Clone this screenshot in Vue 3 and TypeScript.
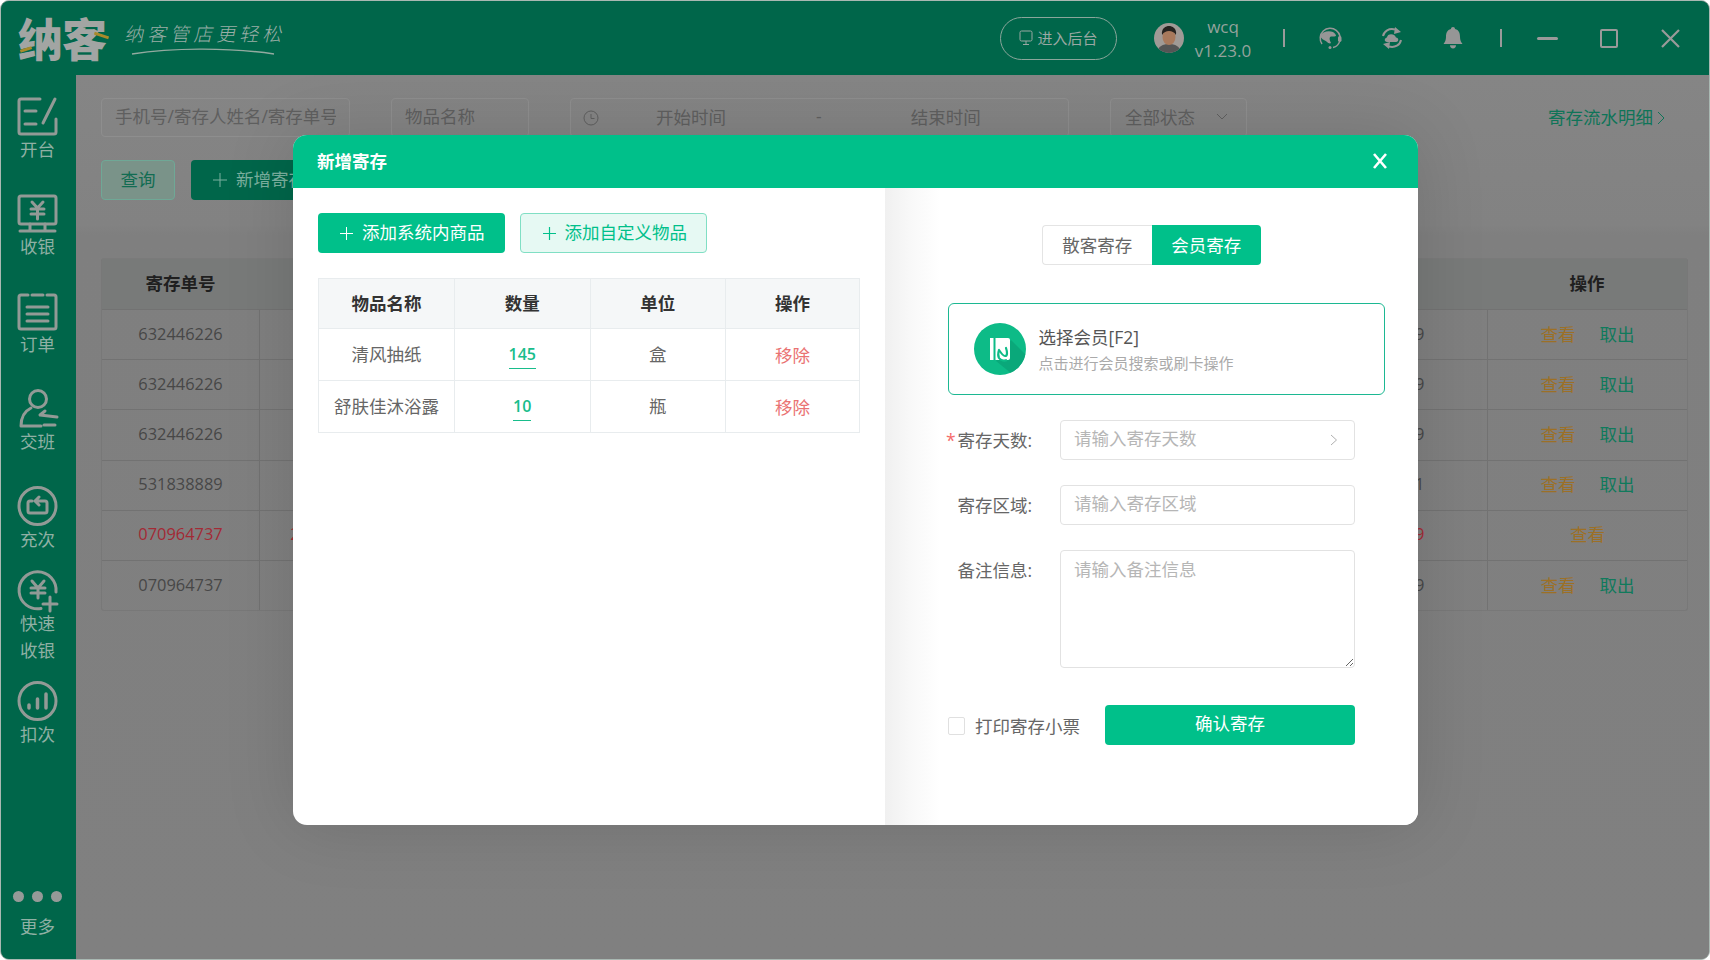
<script setup lang="ts">
interface Row { no: string; name: string; end: string; takeOut: boolean; overdue?: boolean }
const rows: Row[] = [
  { no: '632446226', name: '', end: '2022-04-09', takeOut: true },
  { no: '632446226', name: '', end: '2022-04-09', takeOut: true },
  { no: '632446226', name: '', end: '2022-04-09', takeOut: true },
  { no: '531838889', name: '', end: '2022-04-01', takeOut: true },
  { no: '070964737', name: '2022-03-29 16:40:39', end: '2022-03-29', takeOut: false, overdue: true },
  { no: '070964737', name: '', end: '2022-04-09', takeOut: true },
]
const goods = [
  { name: '清风抽纸', qty: '145', unit: '盒' },
  { name: '舒肤佳沐浴露', qty: '10', unit: '瓶' },
]
</script>

<template>
  <div class="window">
    <header class="topbar">
      <div class="logo">
        <div class="logo-mark">
          <span class="logo-main">纳客</span>
          <i class="accent a1" />
          <i class="accent a2" />
        </div>
        <div class="slogan">
          <span>纳客管店更轻松</span>
          <svg width="144" height="8" viewBox="0 0 144 8"><path d="M1 7C40 1 95 0 143 7" fill="none" stroke="#93aaa0" stroke-width="1.4" /></svg>
        </div>
      </div>
      <div class="top-right">
        <button class="admin-btn">
          <svg width="14" height="16" viewBox="0 0 14 16"><rect x="1" y="1" width="12" height="10" rx="1.5" fill="none" stroke="#9aa8a3" /><path d="M7 11v3M4 14.500h6" stroke="#9aa8a3" /></svg>
          <span>进入后台</span>
        </button>
        <svg class="avatar" width="30" height="30" viewBox="0 0 30 30">
          <defs><clipPath id="av"><circle cx="15" cy="15" r="15" /></clipPath></defs>
          <g clip-path="url(#av)">
            <rect width="30" height="30" fill="#a09a96" />
            <path d="M3 30c1-7 6-9 12-9s11 2 12 9z" fill="#555" />
            <ellipse cx="15" cy="14" rx="6.500" ry="8" fill="#a8795c" />
            <path d="M8 12c-1-7 4-9 7-9s8 2 7 9c-2-3-4-4-7-4s-5 1-7 4z" fill="#26221f" />
          </g>
        </svg>
        <div class="user"><span>wcq</span><span>v1.23.0</span></div>
        <i class="sep" />
        <svg class="ic i-head" width="23" height="22" viewBox="0 0 23 22">
          <path d="M3 17A10 10 0 1 1 20 16c-1 2-3 4-6 4.500" fill="none" stroke="#969696" stroke-width="1.500" />
          <path d="M1 9c2-4 8-6 13-4 2 1 3 3 3 4-2 1-5 0-6 1-1 2 0 4 1 6-1 1-3 0-4-1-2-2-5-2-7-6z" fill="#969696" />
          <rect x="19" y="9" width="3.500" height="6" rx="1.700" fill="#969696" />
          <circle cx="11" cy="20.500" r="1.500" fill="#969696" />
        </svg>
        <svg class="ic i-sync" width="22" height="22" viewBox="0 0 22 22">
          <path d="M2 9C3 4 8 1 14 2.500M20 13c-1 5-6 8-12 6.500" fill="none" stroke="#969696" stroke-width="2" />
          <path d="M14 0l6 5-7 2zM8 22l-6-5 7-2z" fill="#969696" />
          <path d="M6 15c-3 0-3-4 0-4.500C6 6 14 6 15 10.500c3 0 3 4.500 0 4.500z" fill="#969696" />
        </svg>
        <svg class="ic i-bell" width="20" height="22" viewBox="0 0 20 22">
          <path d="M10 0c1.300 0 2 .8 2 2 4 1 5 4 5 8 0 3 1 5 2.500 7H.5C2 15 3 13 3 10c0-4 1-7 5-8 0-1.200.7-2 2-2z" fill="#969696" />
          <path d="M7 18.300h6c0 2-1.200 3.200-3 3.200s-3-1.200-3-3.200z" fill="#969696" />
        </svg>
        <i class="sep sep2" />
        <span class="win-min" />
        <span class="win-max" />
        <svg class="win-close" width="21" height="19" viewBox="0 0 21 19"><path d="M2 1l17 17M19 1L2 18" stroke="#9a9a9a" stroke-width="2.200" /></svg>
      </div>
    </header>

    <div class="main">
      <aside class="sidebar">
        <div class="nav-list">
          <div class="nav-item">
            <svg width="41" height="39" viewBox="0 0 41 39" class="nav-ic"><path d="M23 2H4a2 2 0 0 0-2 2v31a2 2 0 0 0 2 2h33a2 2 0 0 0 2-2V22M8 14h11M8 27h11M38 2L26 26" /></svg>
            <span>开台</span>
          </div>
          <div class="nav-item">
            <svg width="41" height="39" viewBox="0 0 41 39" class="nav-ic"><rect x="2" y="2" width="37" height="28" rx="2" /><path d="M13 30v7M28 30v7M3 37h35M15 8l5.500 6 5.500-6M14 15h13M14 20h13M20.500 14v11" /></svg>
            <span>收银</span>
          </div>
          <div class="nav-item">
            <svg width="41" height="39" viewBox="0 0 41 39" class="nav-ic"><path d="M11 3H4a2 2 0 0 0-2 2v30a2 2 0 0 0 2 2h33a2 2 0 0 0 2-2V5a2 2 0 0 0-2-2h-7M15 3h11M10 15h21M10 22h21M10 29h21" /></svg>
            <span>订单</span>
          </div>
          <div class="nav-item">
            <svg width="41" height="39" viewBox="0 0 41 39" class="nav-ic"><circle cx="21" cy="10" r="8.500" /><path d="M14 19C8 22 4 28 4 37h20M28 22l-5 4 17 2M27 36h11" /></svg>
            <span>交班</span>
          </div>
          <div class="nav-item">
            <svg width="41" height="40" viewBox="0 0 41 40" class="nav-ic"><circle cx="20.500" cy="20" r="18.500" /><path d="M15 15h-2a2 2 0 0 0-2 2v8a2 2 0 0 0 2 2h15a2 2 0 0 0 2-2v-8a2 2 0 0 0-2-2h-7M22 11l-4 4 4 4" /></svg>
            <span>充次</span>
          </div>
          <div class="nav-item">
            <svg width="41" height="39" viewBox="0 0 41 39" class="nav-ic"><path d="M39 21A18.500 18.500 0 1 0 24 37.500M15 10l6 7 6-7M14 17h14M14 22h14M21 17v10M33 26v14M26 33h14" /></svg>
            <span>快速<br />收银</span>
          </div>
          <div class="nav-item">
            <svg width="41" height="40" viewBox="0 0 41 40" class="nav-ic"><circle cx="20.500" cy="20" r="18.500" /><path d="M12 24v3" stroke-width="3.500" /><path d="M20.500 18v9" stroke-width="3.500" /><path d="M29 13v14" stroke-width="3.500" /></svg>
            <span>扣次</span>
          </div>
        </div>
        <div class="more">
          <div class="dots"><i /><i /><i /></div>
          <span>更多</span>
        </div>
      </aside>

      <section class="content">
        <div class="filters">
          <input class="f-input w-phone" placeholder="手机号/寄存人姓名/寄存单号" />
          <input class="f-input w-goods" placeholder="物品名称" />
          <div class="f-date">
            <svg width="16" height="16" viewBox="0 0 16 16"><circle cx="8" cy="8" r="7" fill="none" stroke="#5f5f5f" /><path d="M8 4v4.500h3.500" fill="none" stroke="#5f5f5f" /></svg>
            <span class="d1">开始时间</span><span class="d2">-</span><span class="d3">结束时间</span>
          </div>
          <div class="f-select">
            <span>全部状态</span>
            <svg width="12" height="8" viewBox="0 0 12 8"><path d="M1 1l5 5 5-5" fill="none" stroke="#5f5f5f" /></svg>
          </div>
          <a class="flow-link"><span>寄存流水明细</span><svg width="8" height="14" viewBox="0 0 8 14"><path d="M1 1l6 6-6 6" fill="none" stroke="#0f7458" /></svg></a>
        </div>
        <div class="actions">
          <button class="btn-query">查询</button>
          <button class="btn-new"><svg width="14" height="14" viewBox="0 0 14 14"><path d="M7 0v14M0 7h14" stroke="#7bb09f" /></svg><span>新增寄存</span></button>
        </div>
        <div class="data-table">
          <div class="tr th">
            <div class="cell">寄存单号</div>
            <div class="cell" /><div class="cell" /><div class="cell" /><div class="cell" /><div class="cell" />
            <div class="cell">操作</div>
          </div>
          <div v-for="(r, i) in rows" :key="i" class="tr" :class="{ overdue: r.overdue }">
            <div class="cell">{{ r.no }}</div>
            <div class="cell">{{ r.name }}</div>
            <div class="cell" /><div class="cell" /><div class="cell" />
            <div class="cell">{{ r.end }}</div>
            <div class="cell ops">
              <a class="view">查看</a>
              <a v-if="r.takeOut" class="take">取出</a>
            </div>
          </div>
        </div>
      </section>
    </div>

    <div class="modal">
      <div class="modal-head">
        <span>新增寄存</span>
        <svg width="14" height="16" viewBox="0 0 14 16"><path d="M1 1l12 14M13 1L1 15" stroke="#fff" stroke-width="2.600" /></svg>
      </div>
      <div class="modal-body">
        <div class="m-left">
          <div class="m-btns">
            <button class="add solid"><svg width="13" height="13" viewBox="0 0 13 13"><path d="M6.500 0v13M0 6.500h13" stroke="#fff" /></svg><span>添加系统内商品</span></button>
            <button class="add light"><svg width="13" height="13" viewBox="0 0 13 13"><path d="M6.500 0v13M0 6.500h13" stroke="#00c08a" stroke-width="1.200" /></svg><span>添加自定义物品</span></button>
          </div>
          <div class="goods">
            <div class="g-row g-head"><div>物品名称</div><div>数量</div><div>单位</div><div>操作</div></div>
            <div v-for="g in goods" :key="g.name" class="g-row">
              <div>{{ g.name }}</div>
              <div><span class="qty">{{ g.qty }}</span></div>
              <div>{{ g.unit }}</div>
              <div class="remove">移除</div>
            </div>
          </div>
        </div>
        <div class="m-right">
          <div class="seg">
            <span class="seg-a">散客寄存</span>
            <span class="seg-b">会员寄存</span>
          </div>
          <div class="member">
            <svg width="52" height="52" viewBox="0 0 52 52">
              <defs><clipPath id="mc"><circle cx="26" cy="26" r="26" /></clipPath></defs>
              <circle cx="26" cy="26" r="26" fill="#0dbb87" />
              <path d="M22 38L37 17l20 20-14 18z" fill="#0aa87a" clip-path="url(#mc)" />
              <path d="M16 15h3.500v22H16z" fill="#fff" />
              <path d="M21.500 15H34a2 2 0 0 1 2 2v18a2 2 0 0 1-2 2H21.500z" fill="#fff" />
              <path d="M25 27c2 3 4 6 6 6 3 0 2-5 1-8" fill="none" stroke="#0dbb87" stroke-width="2.200" stroke-linecap="round" />
              <path d="M33 37c-2 1-6 1-8-2-1-2-1-5 0-8" fill="none" stroke="#0dbb87" stroke-width="2.200" />
            </svg>
            <div class="member-text">
              <div class="mt1">选择会员[F2]</div>
              <div class="mt2">点击进行会员搜索或刷卡操作</div>
            </div>
          </div>
          <div class="field">
            <label><i class="star">*</i>寄存天数:</label>
            <div class="input-wrap">
              <input placeholder="请输入寄存天数" />
              <svg width="8" height="12" viewBox="0 0 8 12"><path d="M1 1l5.500 5L1 11" fill="none" stroke="#b0b0b0" /></svg>
            </div>
          </div>
          <div class="field">
            <label><i class="star" />寄存区域:</label>
            <div class="input-wrap"><input placeholder="请输入寄存区域" /></div>
          </div>
          <div class="field">
            <label><i class="star" />备注信息:</label>
            <textarea placeholder="请输入备注信息" />
          </div>
          <div class="foot">
            <span class="check" />
            <span class="check-label">打印寄存小票</span>
            <button class="confirm">确认寄存</button>
          </div>
        </div>
      </div>
    </div>
  </div>
</template>

<style>
html, body { margin: 0; background: #fff; }
</style>

<style scoped>
* { box-sizing: border-box; }
.window {
  position: relative;
  width: 1710px;
  height: 960px;
  border: 1px solid #a9b8b2;
  border-radius: 9px;
  overflow: hidden;
  background: #808080;
  display: flex;
  flex-direction: column;
  font-family: "Open Sans", "Noto Sans CJK SC", sans-serif;
  font-size: 17.5px;
}
button { font-family: inherit; cursor: pointer; }
.topbar {
  height: 74px;
  flex: none;
  background: #00664a;
  display: flex;
  justify-content: space-between;
  align-items: center;
}
.logo { display: flex; align-items: center; margin-left: 17px; }
.logo-mark { position: relative; width: 108px; height: 50px; }
.logo-main {
  font-family: "Noto Sans CJK SC", sans-serif;
  font-weight: 900;
  font-size: 45px;
  line-height: 50px;
  color: #a2a5a3;
  letter-spacing: -1px;
}
.accent { position: absolute; height: 3px; background: #a88a2a; transform: rotate(-18deg); }
.a1 { left: 2px; top: 35px; width: 12px; }
.a2 { left: 76px; top: 21px; width: 15px; transform: rotate(18deg); }
.slogan { display: flex; flex-direction: column; color: #9aaea6; }
.slogan span {
  font-family: "Noto Sans CJK SC", sans-serif;
  font-weight: 300;
  font-size: 19px;
  line-height: 24px;
  letter-spacing: 4px;
  display: block;
  transform: skewX(-12deg);
}
.slogan svg { margin-left: 5px; margin-top: 2px; }
.top-right { display: flex; align-items: center; height: 100%; }
.admin-btn {
  width: 117px;
  height: 43px;
  border: 1px solid #8aa69b;
  border-radius: 22px;
  background: transparent;
  color: #9aa8a3;
  font-size: 15px;
  display: flex;
  align-items: center;
  justify-content: center;
  gap: 4px;
  padding: 0;
}
.admin-btn span { padding-bottom: 2px; }
.avatar { margin-left: 37px; }
.user {
  margin-left: -5px;
  width: 88px;
  display: flex;
  flex-direction: column;
  align-items: center;
  color: #94a39d;
  font-size: 17px;
  line-height: 24px;
  margin-top: 2px;
}
.sep { width: 2px; height: 18px; background: #9a9a9a; margin-left: 16px; display: block; }
.sep2 { margin-left: 37px; }
.i-head { margin-left: 34px; }
.i-sync { margin-left: 39px; }
.i-bell { margin-left: 40px; }
.win-min { width: 21px; height: 3px; border-radius: 2px; background: #9a9a9a; margin-left: 35px; }
.win-max { width: 18px; height: 19px; border: 2px solid #9a9a9a; border-radius: 2px; margin-left: 42px; }
.win-close { margin-left: 42px; margin-right: 28px; }

.main { flex: 1; display: flex; min-height: 0; }
.sidebar {
  width: 75px;
  flex: none;
  background: #00664a;
  display: flex;
  flex-direction: column;
  justify-content: space-between;
  align-items: center;
  padding: 22px 2px 0 0;
}
.nav-list { display: flex; flex-direction: column; align-items: center; }
.nav-item {
  display: flex;
  flex-direction: column;
  align-items: center;
  color: #8fb0a4;
  font-size: 17.5px;
  line-height: 27px;
  text-align: center;
  margin-bottom: 31px;
}
.nav-item:nth-child(2) { margin-bottom: 32px; }
.nav-item:nth-child(5) { margin-bottom: 18px; }
.nav-item:nth-child(6) { margin-bottom: 17px; }
.nav-ic { fill: none; stroke: #929a96; stroke-width: 3; stroke-linecap: round; stroke-linejoin: round; overflow: visible; }
.more { display: flex; flex-direction: column; align-items: center; padding-bottom: 19px; color: #8fb0a4; line-height: 27px; }
.dots { display: flex; gap: 8px; margin-bottom: 11px; }
.dots i { width: 11px; height: 11px; border-radius: 50%; background: #969a98; display: block; }

.content {
  flex: 1;
  min-width: 0;
  padding: 23px 21px 0 25px;
  background: linear-gradient(#858585 0, #828282 150px, #7f7f7f 160px, #808080 100%);
}
.filters { display: flex; align-items: center; height: 39px; }
.f-input, .f-date, .f-select {
  height: 39px;
  border: 1px solid #8e8e8e;
  border-radius: 4px;
  background: transparent;
  color: #5f5f5f;
  font-family: inherit;
  font-size: 17.5px;
}
.f-input { padding: 0 13px 4px; outline: none; }
.f-input::placeholder { color: #5f5f5f; }
.w-phone { width: 249px; }
.w-goods { width: 138px; margin-left: 41px; }
.f-date { width: 499px; margin-left: 41px; display: flex; align-items: center; padding: 0 0 3px 12px; }
.f-date svg { margin-top: 3px; }
.d1 { margin-left: 57px; }
.d2 { margin-left: 90px; }
.d3 { margin-left: 89px; }
.f-select { width: 137px; margin-left: 41px; display: flex; align-items: center; justify-content: space-between; padding: 0 18px 2px 14px; }
.flow-link { margin-left: auto; margin-right: 23px; color: #0f7458; display: flex; align-items: center; gap: 4px; }
.flow-link span { padding-bottom: 3px; }
.actions { display: flex; gap: 16px; margin-top: 23px; }
.btn-query {
  width: 74px;
  height: 40px;
  border: 1px solid #6fa896;
  border-radius: 4px;
  background: #7a9389;
  color: #126c52;
  font-size: 17.5px;
  padding: 0 0 4px;
}
.btn-new {
  width: 187px;
  height: 40px;
  border: 0;
  border-radius: 4px;
  background: #00664a;
  color: #7bb09f;
  font-size: 17.5px;
  display: flex;
  align-items: center;
  gap: 9px;
  padding: 0 0 0 22px;
}
.btn-new span { padding-bottom: 4px; }
.data-table { margin-top: 58px; border: 1px solid #787878; border-top-color: #7a7a7a; border-radius: 3px; }
.tr {
  display: grid;
  grid-template-columns: 157px 216px 321px 200px 279px 212px 1fr;
  height: 50.200px;
  border-top: 1px solid #727272;
  color: #474747;
  font-size: 16.400px;
}
.tr.th { height: 50px; border-top: 0; background: #787a79; color: #1f1f1f; font-weight: 700; font-family: "Noto Sans CJK SC", sans-serif; font-size: 17.5px; }
.tr.overdue { color: #a32a35; }
.cell { display: flex; align-items: center; justify-content: center; white-space: nowrap; padding-bottom: 3px; }
.tr:not(.th) .cell + .cell { border-left: 1px solid #727272; }
.ops { gap: 24px; font-size: 17.5px; }
.view { color: #9c7026; }
.take { color: #107a5c; }

.modal {
  position: absolute;
  left: 292px;
  top: 134px;
  width: 1125px;
  height: 690px;
  border-radius: 14px;
  overflow: hidden;
  background: #fff;
  box-shadow: 0 0 70px rgba(0, 0, 0, .13);
  display: flex;
  flex-direction: column;
}
.modal-head {
  height: 53px;
  flex: none;
  background: #00c08a;
  color: #fff;
  font-weight: 700;
  font-family: "Noto Sans CJK SC", sans-serif;
  display: flex;
  align-items: center;
  justify-content: space-between;
  padding: 0 31px 2px 24px;
}
.modal-body { flex: 1; display: flex; min-height: 0; }
.m-left { width: 592px; flex: none; padding: 25px 0 0 25px; }
.m-btns { display: flex; gap: 14.500px; }
.add {
  width: 187.500px;
  height: 40px;
  border-radius: 4px;
  font-size: 17.5px;
  display: flex;
  align-items: center;
  padding: 0 0 0 22px;
  gap: 9px;
}
.add span { padding-bottom: 4px; }
.add.solid { background: #00c08a; border: 0; color: #fff; width: 187px; }
.add.light { background: #e6f9f3; border: 1px solid #80dfc4; color: #00c08a; }
.goods { margin-top: 25px; width: 542px; border: 1px solid #e8ecee; border-bottom: 0; }
.g-row {
  display: grid;
  grid-template-columns: 135px 135.500px 135.500px 1fr;
  height: 52px;
  border-bottom: 1px solid #e8ecee;
  color: #666;
}
.g-row > div { display: flex; align-items: center; justify-content: center; padding-bottom: 3px; }
.g-row > div + div { border-left: 1px solid #e8ecee; }
.g-row > .remove { padding-bottom: 1px; }
.g-head { height: 50px; background: #f5f7f8; color: #333; font-weight: 700; font-family: "Noto Sans CJK SC", sans-serif; }
.qty { color: #18bd8b; font-weight: 600; font-size: 16px; line-height: 22px; padding-bottom: 3px; border-bottom: 1px solid #18bd8b; margin-top: 6px; }
.remove { color: #ea7272; }

.m-right {
  flex: 1;
  min-width: 0;
  background: linear-gradient(90deg, #f0f0f0 0, #f8f8f8 25px, #fff 55px);
  padding-top: 37px;
  display: flex;
  flex-direction: column;
}
.seg { display: flex; justify-content: center; height: 40px; font-size: 17.5px; }
.seg span { width: 109.500px; display: flex; align-items: center; justify-content: center; padding-bottom: 2px; }
.seg-a { border: 1px solid #e4e4e4; border-right: 0; border-radius: 4px 0 0 4px; color: #666; background: #fff; }
.seg-b { background: #00c08a; color: #fff; border-radius: 0 4px 4px 0; }
.member {
  margin: 38px 0 0 63px;
  width: 436.500px;
  height: 92px;
  border: 1.500px solid #1cb892;
  border-radius: 6px;
  display: flex;
  align-items: center;
  padding-left: 24.500px;
  gap: 13px;
}
.mt1 { color: #555; line-height: 26px; }
.mt2 { color: #aaa; font-size: 15px; line-height: 22px; margin-top: 2px; }
.field {
  display: grid;
  grid-template-columns: 114px 295px;
  margin: 25px 0 0 61px;
  color: #666;
  line-height: 40px;
}
.field label { display: flex; }
.star { width: 11.500px; color: #f56c6c; font-style: normal; }
.input-wrap { position: relative; height: 40px; display: block; }
.input-wrap input, .field textarea {
  display: block;
  width: 100%;
  height: 100%;
  border: 1px solid #e2e2e2;
  border-radius: 4px;
  padding: 0 13px 4px;
  font-family: inherit;
  font-size: 17.5px;
  color: #666;
  outline: none;
  background: #fff;
}
.input-wrap svg { position: absolute; right: 17px; top: 14px; }
.field textarea { height: 118px; padding: 5px 13px; line-height: 26px; resize: vertical; }
.field ::placeholder { color: #b6b6b6; }
.foot { display: flex; align-items: center; margin: 37px 0 0 63px; }
.check { width: 17px; height: 18px; border: 1px solid #e0e0e0; border-radius: 2px; margin-top: 2px; }
.check-label { margin-left: 10px; color: #666; width: 130px; }
.confirm {
  width: 250px;
  height: 40px;
  border: 0;
  border-radius: 4px;
  background: #00c08a;
  color: #fff;
  font-size: 17.5px;
  padding: 0 0 5px;
}
</style>
